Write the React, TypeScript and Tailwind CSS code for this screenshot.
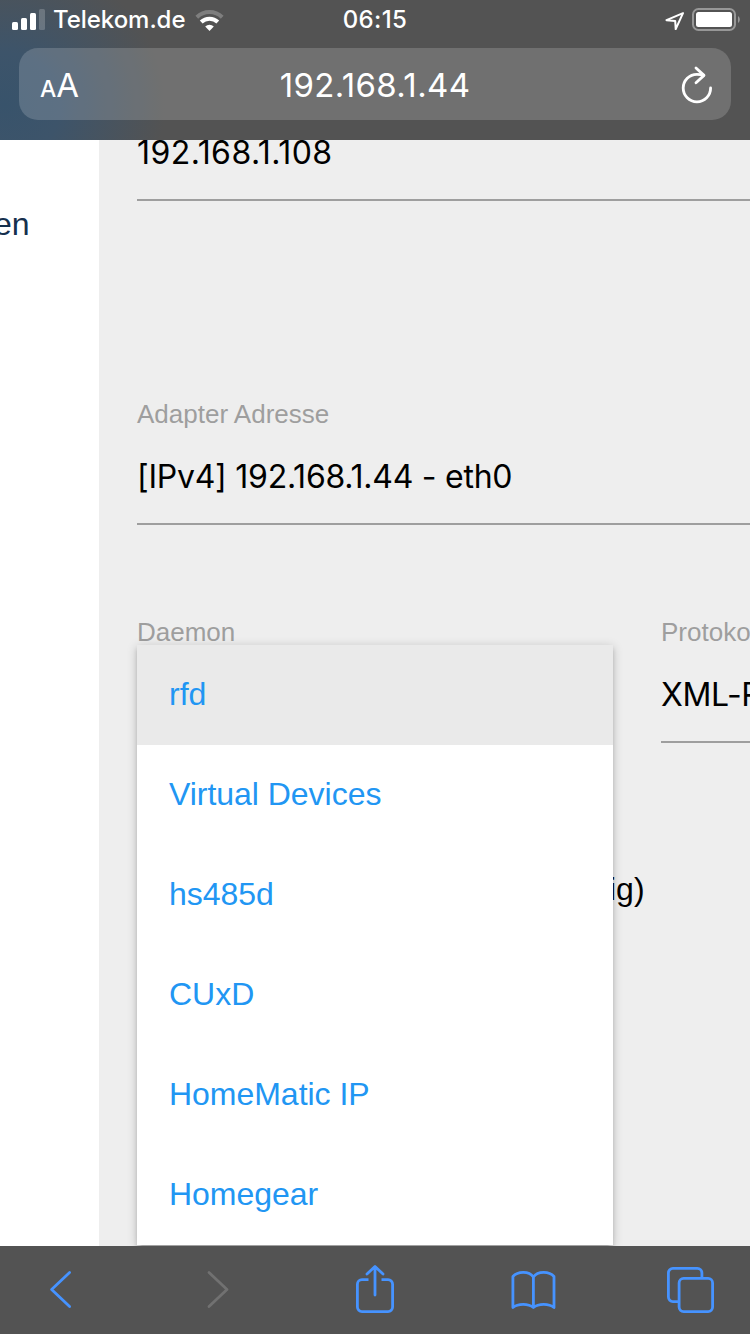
import { useState } from "react";
import type { ReactNode } from "react";
import { clsx } from "clsx";

const daemons = ["rfd", "Virtual Devices", "hs485d", "CUxD", "HomeMatic IP", "Homegear"];

function StatusBar() {
  return (
    <div className="grid h-10 grid-cols-3 items-center text-[24px] leading-10 font-medium text-white">
      <div className="flex items-center pl-3">
        <svg width="34" height="22" viewBox="0 0 34 22" fill="white">
          <rect x="0" y="13" width="6" height="8" rx="1.5" />
          <rect x="9" y="9" width="6" height="12" rx="1.5" />
          <rect x="18" y="4" width="6" height="17" rx="1.5" />
          <rect x="27" y="0" width="6" height="21" rx="1.5" opacity="0.2" />
        </svg>
        <span className="ml-[7px] w-[141px] tracking-[-0.05px] whitespace-nowrap">Telekom.de</span>
        <svg width="32" height="24" viewBox="0 0 32 24" fill="none" stroke="white">
          <path d="M2.8 9.2a18.4 18.4 0 0 1 25.4 0" strokeWidth="4" opacity="0.25" />
          <path d="M7.2 14a11.9 11.9 0 0 1 16.6 0" strokeWidth="4" />
          <path d="M11.2 18.4a6.2 6.2 0 0 1 8.6 0L15.5 23Z" fill="white" stroke="none" />
        </svg>
      </div>
      <span className="text-center tracking-[0.4px]">06:15</span>
      <div className="flex items-center justify-end pr-[9px]">
        <svg width="20" height="20" viewBox="0 0 20 20" fill="none" stroke="white" strokeWidth="2" strokeLinejoin="round">
          <path d="M18 3.2 1.5 10.2l8.7.7.5 8.3Z" />
        </svg>
        <svg className="ml-[7px]" width="49" height="24" viewBox="0 0 49 24" fill="none">
          <rect x="1" y="1" width="42" height="21" rx="5.5" stroke="white" strokeWidth="2" opacity="0.4" />
          <rect x="4" y="4" width="36" height="15" rx="2.5" fill="white" />
          <path d="M46 8c2.4 1.5 2.4 5.5 0 7Z" fill="white" opacity="0.4" />
        </svg>
      </div>
    </div>
  );
}

function AddressBar() {
  return (
    <div className="mx-[19px] mt-2 grid h-[72px] grid-cols-[60px_1fr_60px] items-center rounded-[19px] bg-white/17 text-white">
      <div className="pt-px pl-[21px] leading-[72px] whitespace-nowrap">
        <span className="text-[23px] font-medium">A</span>
        <span className="text-[33px]">A</span>
      </div>
      <span className="pb-[5px] text-center text-[33px] leading-[67px] tracking-[0.35px]">192.168.1.44</span>
      <button className="flex justify-end pr-[17px] pb-[5px]">
        <svg width="34" height="40" viewBox="0 0 34 40" fill="none" stroke="white" strokeWidth="2.8" strokeLinecap="round" strokeLinejoin="round">
          <path d="M30.6 23A13.7 13.7 0 1 1 17 9.4q4 0 6.6.8" />
          <path d="m16 3 8 7.4-8 7.4" />
        </svg>
      </button>
    </div>
  );
}

function Field({ label, value, className }: { label?: string; value?: string; className?: string }) {
  return (
    <div className="whitespace-nowrap">
      {label && <div className="font-['Liberation_Sans',sans-serif] text-[26px] leading-8 text-[#9e9e9e]">{label}</div>}
      <div className={clsx("h-[95px] border-b-2 border-[#9e9e9e] text-[32px] leading-[93px] text-black", className)}>{value}</div>
    </div>
  );
}

function DaemonSelect() {
  const [selected, setSelected] = useState("rfd");

  return (
    <div className="relative">
      <Field label="Daemon" />
      {/* open dropdown, lies over the fields below */}
      <ul className="absolute top-[29px] left-0 h-[600px] w-[476px] bg-white font-['Liberation_Sans',sans-serif] shadow-[0_4px_4px_0_rgba(0,0,0,0.14),0_6px_2px_-4px_rgba(0,0,0,0.12),0_2px_10px_0_rgba(0,0,0,0.2)]">
        {daemons.map((name) => (
          <li
            key={name}
            onClick={() => setSelected(name)}
            className={clsx(
              "h-[100px] cursor-pointer pl-8 text-[32px] leading-[99px] tracking-[-0.03px] text-[#2196f3]",
              name === selected && "bg-[#eaeaea]"
            )}
          >
            {name}
          </li>
        ))}
      </ul>
    </div>
  );
}

function ToolButton({ children, disabled }: { children: ReactNode; disabled?: boolean }) {
  return (
    <button disabled={disabled} className={disabled ? "text-[#717171]" : "text-[#4693ff]"}>
      <svg width="56" height="56" viewBox="0 0 56 56" fill="none" stroke="currentColor" strokeWidth="2.8" strokeLinecap="round" strokeLinejoin="round">
        {children}
      </svg>
    </button>
  );
}

function Toolbar() {
  return (
    <div className="flex h-[88px] items-start justify-between bg-[#535353] px-8 pt-4">
      <ToolButton>
        <path d="M37.6 10.5 19.6 27.5l18 17" />
      </ToolButton>
      <ToolButton disabled>
        <path d="m19 10.5 18 17-18 17" />
      </ToolButton>
      <ToolButton>
        <path d="M21.5 17.7H15a4.6 4.6 0 0 0-4.6 4.6v22.8a4.6 4.6 0 0 0 4.6 4.6h26a4.6 4.6 0 0 0 4.6-4.6V22.3a4.6 4.6 0 0 0-4.6-4.6h-6.5" strokeLinecap="butt" />
        <path d="M28 33V4.7M20 12l8-7.6 8 7.6" />
      </ToolButton>
      <ToolButton>
        <path d="M28.4 15C24 9 13 9 7.9 14.5v31c5-4.3 15.5-4.3 20.5 0 5-4.3 15.6-4.3 20.6 0v-31C44 9 32.8 9 28.4 15Zm0 0v30" />
      </ToolButton>
      <ToolButton>
        <rect x="17.1" y="16.4" width="33.5" height="33.2" rx="4.5" />
        <path d="M39.9 16v-5.1a4.5 4.5 0 0 0-4.5-4.5H10.9a4.5 4.5 0 0 0-4.5 4.5v24.2a4.5 4.5 0 0 0 4.5 4.5H17" strokeLinecap="butt" />
      </ToolButton>
    </div>
  );
}

export default function App() {
  return (
    <div className="flex h-[1334px] w-[750px] flex-col overflow-hidden bg-[#eeeeee] font-[Inter,sans-serif]">
      <header className="h-[140px] shrink-0 bg-[#535353] bg-[radial-gradient(ellipse_160px_150px_at_5px_105px,#38536b_0%,#3d546a_35%,#535353_100%)]">
        <StatusBar />
        <AddressBar />
      </header>

      <main className="flex h-[1106px] shrink-0 overflow-hidden">
        <aside className="w-[99px] shrink-0 bg-white pt-[60px]">
          {/* the side menu is scrolled out to the left */}
          <div className="-ml-1.5 font-['Liberation_Sans',sans-serif] text-[32px] leading-[48px] text-[#15304d]">en</div>
        </aside>

        <div className="min-w-0 flex-1 pl-[38px]">
          <div className="-mt-[34px]">
            <Field value="192.168.1.108" className="tracking-[0.45px]" />
          </div>
          <div className="mt-[197px]">
            <Field label="Adapter Adresse" value="[IPv4] 192.168.1.44 - eth0" className="tracking-[-0.25px]" />
          </div>
          <div className="mt-[91px] grid grid-cols-[476px_200px] gap-12">
            <DaemonSelect />
            <Field label="Protokoll" value="XML-RPC" className="tracking-[-0.4px]" />
          </div>
          <div className="mt-[122px] pl-[472px] font-['Liberation_Sans',sans-serif] text-[32px] leading-[48px] text-black">ig)</div>
        </div>
      </main>

      <Toolbar />
    </div>
  );
}
